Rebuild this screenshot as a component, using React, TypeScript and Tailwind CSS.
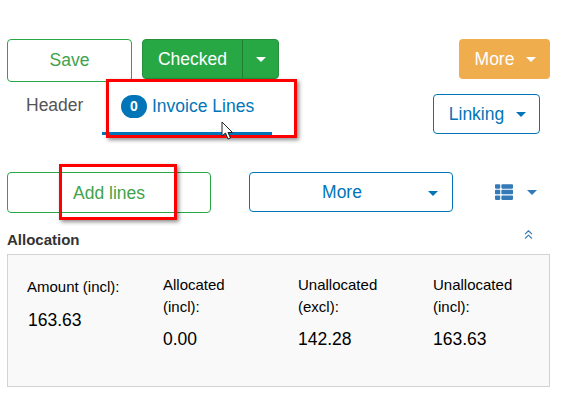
import { FaThList } from 'react-icons/fa';
import { ChevronsUp } from 'lucide-react';

const Caret = ({ className }: { className: string }) => (
  <span className={`inline-block w-0 h-0 border-x-[5px] border-x-transparent border-t-[5px] ${className}`} />
);

const figures = [
  { label: 'Amount (incl):', value: '163.63', single: true },
  { label: 'Allocated (incl):', value: '0.00' },
  { label: 'Unallocated (excl):', value: '142.28' },
  { label: 'Unallocated (incl):', value: '163.63' },
];

export default function App() {
  return (
    <div className="relative w-[587px] h-[411px] overflow-hidden bg-white font-['Liberation_Sans',Arial,sans-serif]">
      <div className="w-[543px] ml-[7px] pt-[39px]">
        {/* Top buttons */}
        <div className="flex items-start">
          <button className="w-[125px] h-[43px] rounded border border-[#28a745] text-[17.5px] text-[#3fa34d]">Save</button>
          <div className="flex ml-[10px] h-[40px] rounded bg-[#28a745] border border-[#258f3d] text-white">
            <button className="w-[100px] text-[17.5px] border-r border-[#1e7e34]">Checked</button>
            <button className="w-[35px] flex items-center justify-center">
              <Caret className="border-t-white" />
            </button>
          </div>
          <button className="ml-auto flex items-center justify-center gap-[12px] w-[91px] h-[40px] pl-[2px] rounded bg-[#f0ad4e] text-white text-[17.5px]">
            More
            <Caret className="border-t-white" />
          </button>
        </div>

        {/* Tabs */}
        <div className="flex items-start justify-between h-[54px] mt-[-1px]">
          <div className="flex h-[54px]">
            <div className="w-[95px] pl-[19px] pt-[12px] text-[17.5px] text-[#555] leading-[24px]">Header</div>
            <div className="w-[170px] h-[54px] flex items-start pl-[19px] pt-[14px] gap-[5px] border-b-[3px] border-[#0275b8]">
              <span className="w-[26px] h-[23px] rounded-full bg-[#0275b8] text-white text-[14px] font-bold flex items-center justify-center">0</span>
              <span className="text-[17.5px] leading-[22px] text-[#0275b8]">Invoice Lines</span>
            </div>
          </div>
          <button className="mt-[13px] mr-[10px] flex items-center justify-center gap-[12px] w-[107px] h-[40px] pl-[2px] rounded border border-[#0275b8] text-[#0275b8] text-[17.5px]">
            Linking
            <Caret className="border-t-[#0275b8]" />
          </button>
        </div>

        {/* Actions */}
        <div className="flex items-start mt-[37px]">
          <button className="w-[204px] h-[41px] pt-[1px] rounded border border-[#28a745] text-[17.5px] text-[#3fa34d]">Add lines</button>
          <button className="relative ml-[38px] w-[204px] h-[40px] pr-[18px] rounded border border-[#0275b8] text-[17.5px] text-[#0275b8]">
            More
            <Caret className="absolute right-[14px] top-[18px] border-t-[#0275b8]" />
          </button>
          <div className="ml-[42px] h-[40px] flex items-center gap-[14px] text-[#337ab7]">
            <FaThList className="w-[18px] h-[18px]" />
            <Caret className="border-t-[#337ab7]" />
          </div>
        </div>

        {/* Allocation */}
        <div className="flex items-center justify-between h-[41px]">
          <h3 className="text-[15px] font-bold text-[#333] pt-[14px]">Allocation</h3>
          <ChevronsUp className="w-[15px] h-[15px] mr-[14px] mt-[1px] text-[#337ab7]" strokeWidth={1.75} />
        </div>
        <div className="grid grid-cols-[135px_135px_135px_135px] h-[133px] pl-[19px] pt-[19px] border border-[#d3d3d3] bg-[#f9f9f9] text-black">
          {figures.map((f) => (
            <div key={f.value + f.label} className={f.single ? '' : 'pl-[1px]'}>
              <div className={`text-[15px] leading-[22px] w-[90px] ${f.single ? 'w-[110px] mt-[2px]' : ''}`}>{f.label}</div>
              <div className={`text-[17.5px] leading-[22px] ${f.single ? 'mt-[11px] pl-[1px]' : 'mt-[10px]'}`}>{f.value}</div>
            </div>
          ))}
        </div>
      </div>

      {/* Screenshot annotations */}
      <div className="absolute left-[106px] top-[79px] w-[191px] h-[59px] border-[3px] border-[#f00] shadow-[2px_2px_4px_rgba(0,0,0,0.45)]" />
      <div className="absolute left-[59px] top-[164px] w-[118px] h-[56px] border-[3px] border-[#f00] shadow-[2px_2px_4px_rgba(0,0,0,0.45)]" />
      <svg className="absolute left-[221px] top-[121px]" width="14" height="20" viewBox="0 0 14 20">
        <path d="M1 1v14l3.5-3 2.5 6 2.5-1-2.5-5.500h4.500z" fill="#fff" stroke="#222" strokeWidth="1" />
      </svg>
    </div>
  );
}
